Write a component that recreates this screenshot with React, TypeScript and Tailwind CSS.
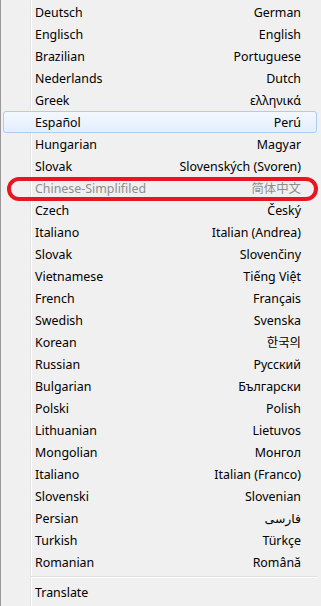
const languages: { name: string; native: string; disabled?: boolean; active?: boolean }[] = [
  { name: "Deutsch", native: "German" },
  { name: "Englisch", native: "English" },
  { name: "Brazilian", native: "Portuguese" },
  { name: "Nederlands", native: "Dutch" },
  { name: "Greek", native: "ελληνικά" },
  { name: "Español", native: "Perú", active: true },
  { name: "Hungarian", native: "Magyar" },
  { name: "Slovak", native: "Slovenských (Svoren)" },
  { name: "Chinese-Simplifiled", native: "简体中文", disabled: true },
  { name: "Czech", native: "Český" },
  { name: "Italiano", native: "Italian (Andrea)" },
  { name: "Slovak", native: "Slovenčiny" },
  { name: "Vietnamese", native: "Tiếng Việt" },
  { name: "French", native: "Français" },
  { name: "Swedish", native: "Svenska" },
  { name: "Korean", native: "한국의" },
  { name: "Russian", native: "Русский" },
  { name: "Bulgarian", native: "Български" },
  { name: "Polski", native: "Polish" },
  { name: "Lithuanian", native: "Lietuvos" },
  { name: "Mongolian", native: "Монгол" },
  { name: "Italiano", native: "Italian (Franco)" },
  { name: "Slovenski", native: "Slovenian" },
  { name: "Persian", native: "فارسی" },
  { name: "Turkish", native: "Türkçe" },
  { name: "Romanian", native: "Română" },
];

const MenuRow = ({
  name,
  native,
  disabled,
  active,
}: {
  name: string;
  native?: string;
  disabled?: boolean;
  active?: boolean;
}) => (
  <div
    className={`relative ml-[2px] mr-[4px] h-[22px] flex items-center justify-between pt-[2px] pl-[31px] pr-[15px] rounded-[3px] border ${
      active
        ? "border-[#aeccf1] bg-[linear-gradient(to_bottom,#f3f8fe,#e3eefc)]"
        : "border-transparent"
    } ${disabled ? "text-[#8d8d8d]" : "text-[#000000]"}`}
  >
    <span>{name}</span>
    {native && <span>{native}</span>}
  </div>
);

const App = () => {
  return (
    <div
      className="relative w-[321px] h-[606px] overflow-hidden bg-[#f0f0f0] border-l border-[#979797] pt-[1px] text-[12.4px] leading-none"
      style={{ fontFamily: '"Noto Sans", "Noto Sans CJK SC", "DejaVu Sans", sans-serif' }}
    >
      {/* gutter line */}
      <div className="absolute top-0 bottom-0 left-[29px] w-[2px] border-l border-[#e2e3e3] border-r border-r-white" />

      {languages.map((l, i) => (
        <MenuRow key={i} {...l} />
      ))}

      {/* separator */}
      <div className="relative h-[8px] flex items-center pl-[30px] pr-[4px]">
        <div className="w-full h-[2px] border-t border-[#e0e0e0] border-b border-b-white" />
      </div>

      <MenuRow name="Translate" />

      {/* annotation */}
      <div className="absolute left-[6px] top-[177px] w-[311px] h-[24px] border-[4px] border-[#e8161e] rounded-[12px]" />
    </div>
  );
};

export default App;
